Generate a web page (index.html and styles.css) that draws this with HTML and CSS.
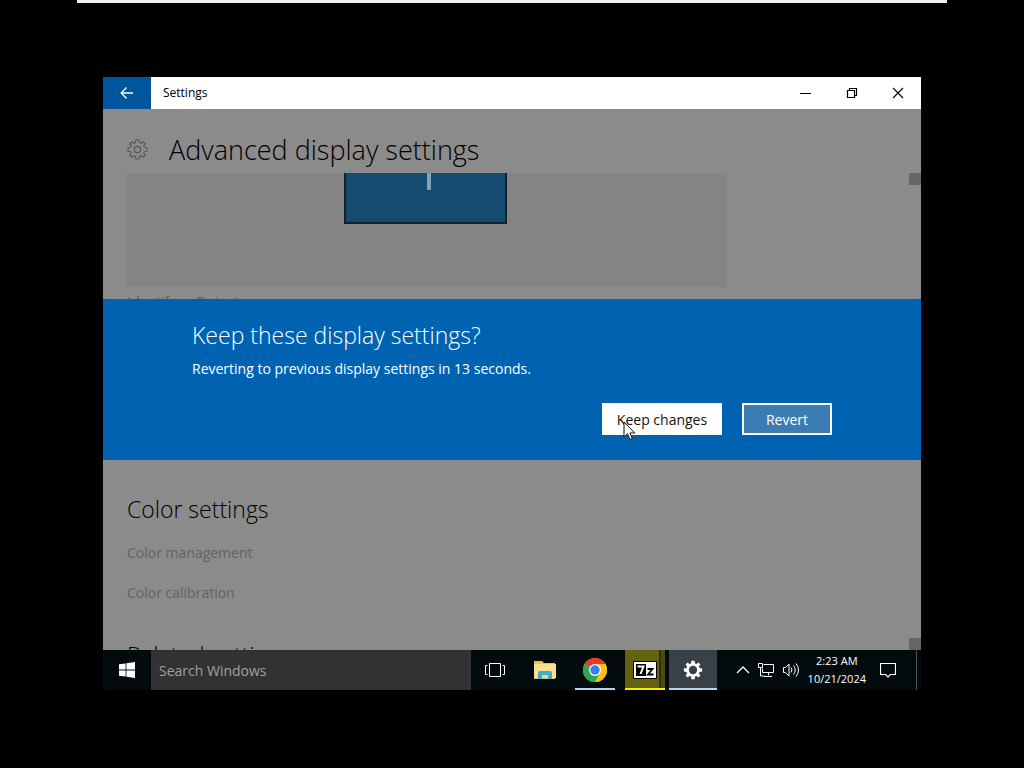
FILE: index.html
```
<!DOCTYPE html>
<html lang="en">
<head>
    <meta charset="UTF-8">
    <meta name="viewport" content="width=device-width, initial-scale=1.0">
    <title>Settings</title>
    <link rel="stylesheet" href="styles.css">
</head>
<body>
    <div class="top-strip"></div>

    <div class="screen">
        <main class="window">
            <div class="titlebar">
                <button class="back-btn" aria-label="Back">
                    <svg width="14" height="14" viewBox="0 0 14 14"><path d="M13 7H1.5M6.5 1.5L1.2 7l5.3 5.5" fill="none" stroke="#fff" stroke-width="1.3"/></svg>
                </button>
                <span class="window-title">Settings</span>
                <button class="window-btn" aria-label="Minimize">
                    <svg width="12" height="12" viewBox="0 0 12 12"><path d="M0 6.5h11" stroke="#000"/></svg>
                </button>
                <button class="window-btn" aria-label="Restore">
                    <svg width="12" height="12" viewBox="0 0 12 12"><path d="M1.5 3.5h7v7h-7zM3.5 3.5v-2h7v7h-2" fill="none" stroke="#000" stroke-width="1.2"/></svg>
                </button>
                <button class="window-btn" aria-label="Close">
                    <svg width="12" height="12" viewBox="0 0 12 12"><path d="M1 1l10 10M11 1L1 11" stroke="#000" stroke-width="1.1"/></svg>
                </button>
            </div>

            <header class="page-header">
                <svg class="page-icon" width="21" height="21" viewBox="-12 -12 24 24">
                    <path d="M-1.9 -10.8L1.9 -10.8L2.4 -7.8L4.2 -7.1L6.5 -8.9L8.9 -6.5L7.1 -4.2L7.8 -2.4L10.8 -1.9L10.8 1.9L7.8 2.4L7.1 4.2L8.9 6.5L6.5 8.9L4.2 7.1L2.4 7.8L1.9 10.8L-1.9 10.8L-2.4 7.8L-4.2 7.1L-6.5 8.9L-8.9 6.5L-7.1 4.2L-7.8 2.4L-10.8 1.9L-10.8 -1.9L-7.8 -2.4L-7.1 -4.2L-8.9 -6.5L-6.5 -8.9L-4.2 -7.1L-2.4 -7.8Z" fill="none" stroke="#555" stroke-width="1.2"/>
                    <circle r="3.6" fill="none" stroke="#555" stroke-width="1.2"/>
                </svg>
                <h1>Advanced display settings</h1>
            </header>

            <div class="content">
                <div class="preview">
                    <div class="monitor"><span class="monitor-number"></span></div>
                </div>
                <div class="preview-links">
                    <a href="#">Identify</a>
                    <a href="#">Detect</a>
                </div>
                <section class="color-section">
                    <h2>Color settings</h2>
                    <a href="#">Color management</a>
                    <a href="#">Color calibration</a>
                </section>
                <section>
                    <h2>Related settings</h2>
                </section>
                <span class="scroll-mark scroll-up"></span>
                <span class="scroll-mark scroll-down"></span>
            </div>

            <div class="dialog" role="dialog" aria-labelledby="dialogTitle">
                <h2 id="dialogTitle">Keep these display settings?</h2>
                <p>Reverting to previous display settings in 13 seconds.</p>
                <div class="dialog-buttons">
                    <button class="keep-btn">Keep changes
                        <svg class="cursor" width="13" height="20" viewBox="0 0 13 20"><path d="M1 1v15l3.5-3.2 2.5 5.7 2.3-1-2.5-5.5h5z" fill="#fff" stroke="#111"/></svg>
                    </button>
                    <button class="revert-btn">Revert</button>
                </div>
            </div>
        </main>

        <footer class="taskbar">
            <button class="start-btn" aria-label="Start">
                <svg width="16" height="16" viewBox="0 0 16 16"><path d="M0 2.3L6.6 1.4V7.6H0zM7.4 1.3L16 0v7.6H7.4zM0 8.4h6.6v6.2L0 13.7zM7.4 8.4H16V16l-8.6-1.3z" fill="#fff"/></svg>
            </button>
            <input class="search" type="text" placeholder="Search Windows" aria-label="Search Windows">
            <div class="apps">
                <button class="app" aria-label="Task view">
                    <svg width="20" height="16" viewBox="0 0 20 16"><path d="M4.5 1.5h11v13h-11zM2.5 3.5h-2v9h2M17.5 3.5h2v9h-2" fill="none" stroke="#fff"/></svg>
                </button>
                <button class="app" aria-label="File Explorer">
                    <svg width="22" height="20" viewBox="0 0 22 20">
                        <path d="M0 1h8l2 2h11v16H0z" fill="#e9c25c"/>
                        <path d="M0 4h22v14H0z" fill="#fbe08f"/>
                        <path d="M4 19v-6q0-2 2-2h10q2 0 2 2v6h-4v-4H8v4z" fill="#43acc4"/>
                        <path d="M8 15h6v3H8z" fill="#b9dfe2"/>
                    </svg>
                </button>
                <button class="app running" aria-label="Chrome">
                    <svg width="24" height="24" viewBox="0 0 24 24">
                        <circle cx="12" cy="12" r="12" fill="#fbc116"/>
                        <path d="M12 12L1.6 6A12 12 0 0 1 22.4 6z" fill="#e33b2e"/>
                        <path d="M1.6 6A12 12 0 0 0 12 24L17.2 15 12 12z" fill="#2da94f"/>
                        <path d="M12 6h10.4A12 12 0 0 1 12 24l5.2-9z" fill="#fbc116"/>
                        <circle cx="12" cy="12" r="6" fill="#fff"/>
                        <circle cx="12" cy="12" r="4.7" fill="#3b7de8"/>
                    </svg>
                </button>
                <button class="app sevenzip" aria-label="7-Zip">
                    <svg width="24" height="18" viewBox="0 0 24 18">
                        <path d="M.5 .5h23v17H.5z" fill="#fff" stroke="#000"/>
                        <path d="M3 3h10v12H3z" fill="#000"/>
                        <path d="M4.5 5.5h6L7.5 13" fill="none" stroke="#fff" stroke-width="2"/>
                        <path d="M14.5 8h5l-4.5 5.5h5.5" fill="none" stroke="#000" stroke-width="1.8"/>
                    </svg>
                </button>
                <button class="app active" aria-label="Settings">
                    <svg width="20" height="20" viewBox="-12 -12 24 24">
                        <path fill-rule="evenodd" d="M-1.9 -11L1.9 -11L2.4 -7.8L4.2 -7.1L6.5 -8.9L8.9 -6.5L7.1 -4.2L7.8 -2.4L11 -1.9L11 1.9L7.8 2.4L7.1 4.2L8.9 6.5L6.5 8.9L4.2 7.1L2.4 7.8L1.9 11L-1.9 11L-2.4 7.8L-4.2 7.1L-6.5 8.9L-8.9 6.5L-7.1 4.2L-7.8 2.4L-11 1.9L-11 -1.9L-7.8 -2.4L-7.1 -4.2L-8.9 -6.5L-6.5 -8.9L-4.2 -7.1L-2.4 -7.8ZM-5 0A5 5 0 1 0 5 0A5 5 0 1 0 -5 0Z" fill="#fff"/>
                    </svg>
                </button>
            </div>
            <div class="tray">
                <button aria-label="Show hidden icons">
                    <svg width="14" height="16" viewBox="0 0 14 16"><path d="M1 11l6-6 6 6" fill="none" stroke="#fff" stroke-width="1.3"/></svg>
                </button>
                <button aria-label="Network">
                    <svg width="16" height="16" viewBox="0 0 16 16"><path d="M5.5 2.5h10v8h-11v-4M10.5 10.5v3M6 14.5h8M.5 1.5h4v4h-4zM2.5 5.5v8.5h4" fill="none" stroke="#fff"/></svg>
                </button>
                <button aria-label="Volume">
                    <svg width="18" height="16" viewBox="0 0 18 16"><path d="M1.5 5.5h2l3.5-3.5v12l-3.5-3.5h-2zM9 5.5q2 2.5 0 5M11.5 3.5q3.5 4.5 0 9M14 1.5q5 6.5 0 13" fill="none" stroke="#fff"/></svg>
                </button>
                <button class="clock"><span>2:23 AM</span><span>10/21/2024</span></button>
                <button class="notify" aria-label="Notifications">
                    <svg width="16" height="16" viewBox="0 0 16 16"><path d="M.5 1.5h15v11h-5L8 15l-2.5-2.5h-5z" fill="none" stroke="#fff" stroke-width="1.2"/></svg>
                </button>
                <button class="show-desktop" aria-label="Show desktop"></button>
            </div>
        </footer>
    </div>
</body>
</html>
```
FILE: styles.css
```
* {
    box-sizing: border-box;
}
body {
    display: flex;
    flex-direction: column;
    height: 100vh;
    margin: 0;
    background-color: #000;
    color: #000;
    font-family: "Open Sans", "Noto Sans", sans-serif;
    font-size: 14px;
}
h1, h2, p {
    margin: 0;
    font-weight: 300;
}
button {
    border: none;
    padding: 0;
    background: none;
    font-family: inherit;
    cursor: pointer;
}
svg {
    display: block;
}
.top-strip {
    flex: none;
    height: 3px;
    margin: 0 77px;
    background-color: #f0f0f0;
}
.screen {
    display: flex;
    flex-direction: column;
    flex: 1;
    min-height: 0;
    margin: 74px 103px 78px;
}
.window {
    position: relative;
    display: flex;
    flex-direction: column;
    flex: 1;
    min-height: 0;
    background-color: #8b8b8b;
}

/* Title bar */
.titlebar {
    display: flex;
    height: 32px;
    background-color: #fff;
}
.back-btn {
    display: grid;
    place-items: center;
    width: 48px;
    background-color: #00569d;
}
.window-title {
    flex: 1;
    padding-left: 12px;
    font-size: 12px;
    line-height: 32px;
}
.window-btn {
    display: grid;
    place-items: center;
    width: 46px;
}

/* Page */
.page-header {
    display: flex;
    align-items: center;
    gap: 21px;
    height: 64px;
    padding: 17px 24px 0;
}
.page-header h1 {
    font-size: 27px;
    line-height: 40px;
}
.content {
    position: relative;
    flex: 1;
    min-height: 0;
    padding: 0 24px;
    overflow: hidden;
}
.content h2 {
    font-size: 23px;
    line-height: 32px;
}
.content a {
    color: #626262;
    text-decoration: none;
}
.preview {
    max-width: 600px;
    height: 114px;
    padding-right: 4px;
    background-color: #848484;
}
.monitor {
    width: 163px;
    height: 51px;
    margin: 0 auto;
    padding-left: 8px;
    border: 2px solid #14212c;
    border-top: none;
    background-color: #154b6e;
}
.monitor-number {
    display: block;
    width: 4px;
    height: 17px;
    margin: 0 auto;
    background-color: #85a3b3;
}
.preview-links {
    display: flex;
    gap: 20px;
    padding-top: 5px;
    line-height: 20px;
}
.color-section {
    display: flex;
    flex-direction: column;
    gap: 20px;
    padding: 181px 0 36px;
    line-height: 20px;
}
.color-section h2 {
    margin-bottom: -2px;
}
.scroll-mark {
    position: absolute;
    right: 0;
    width: 12px;
    height: 12px;
    background-color: #666;
}
.scroll-up {
    top: 0;
}
.scroll-down {
    bottom: 0;
}

/* Confirmation dialog */
.dialog {
    position: absolute;
    top: 222px;
    left: 0;
    right: 0;
    padding: 19px 89px 25px;
    background-color: #0063b1;
    color: #fff;
}
.dialog h2 {
    font-size: 23px;
    line-height: 34px;
}
.dialog p {
    font-weight: 400;
    line-height: 34px;
}
.dialog-buttons {
    display: flex;
    justify-content: flex-end;
    gap: 20px;
    padding-top: 17px;
}
.dialog-buttons button {
    height: 32px;
    font-size: 14px;
}
.keep-btn {
    position: relative;
    width: 120px;
    background-color: #fff;
    color: #111;
}
.revert-btn {
    width: 90px;
    border: 2px solid #fff;
    background-color: #3b7cb5;
    color: #fff;
}
.cursor {
    position: absolute;
    left: 21px;
    top: 18px;
}

/* Taskbar */
.taskbar {
    display: flex;
    flex: none;
    height: 40px;
    background-color: #040b0e;
}
.start-btn {
    display: grid;
    place-items: center;
    width: 48px;
}
.search {
    flex: 1;
    min-width: 0;
    max-width: 320px;
    padding: 0 8px;
    border: none;
    background-color: #323232;
    color: #fff;
    font-family: inherit;
    font-size: 14px;
}
.search::placeholder {
    color: #a0a0a0;
    opacity: 1;
}
.apps {
    display: flex;
    gap: 10px;
    padding-left: 4px;
}
.app {
    display: grid;
    place-items: center;
    width: 40px;
    border-top: 2px solid transparent;
    border-bottom: 2px solid transparent;
}
.running {
    border-bottom-color: #b5d2f0;
}
.sevenzip {
    background: linear-gradient(to right, #64620e 34px, #302f0a 34px, #302f0a 36px, #4b4a10 36px) border-box;
    border-bottom-color: #f4f000;
}
.active {
    width: 48px;
    margin-left: -6px;
    background-color: #394147;
    border-top-color: #394147;
    border-bottom-color: #b5d2f0;
}
.tray {
    display: flex;
    align-items: center;
    gap: 8px;
    margin-left: auto;
}
.clock {
    display: flex;
    flex-direction: column;
    align-items: center;
    color: #fff;
    font-size: 11px;
    line-height: 18px;
}
.notify {
    margin: 0 12px 0 6px;
}
.show-desktop {
    align-self: stretch;
    width: 5px;
    border-left: 1px solid #4b5154;
}
```
